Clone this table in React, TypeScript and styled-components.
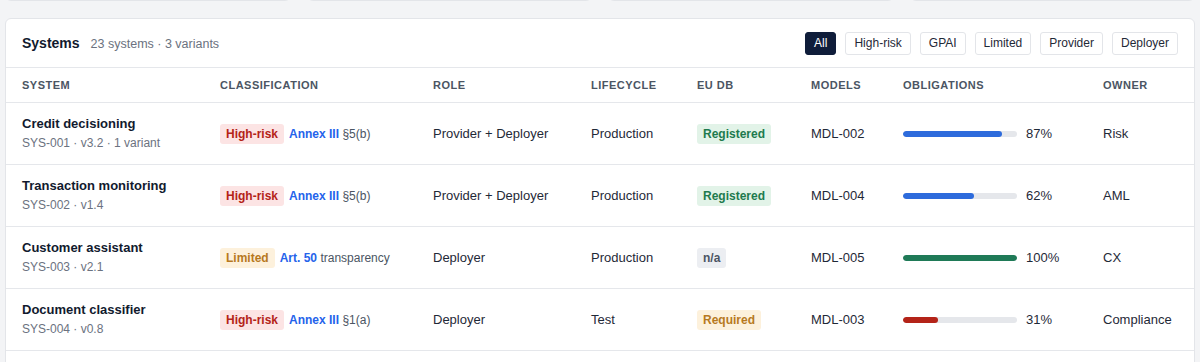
import React from 'react';
import styled, { createGlobalStyle } from 'styled-components';

const GlobalStyle = createGlobalStyle`
  html, body {
    margin: 0;
    padding: 0;
    background: #f3f4f6;
    font-family: 'Liberation Sans', Arial, Helvetica, sans-serif;
    color: #1f2937;
    overflow: hidden;
  }
`;

type Tone = 'red' | 'amber' | 'green' | 'gray';

const tones: Record<Tone, { bg: string; fg: string }> = {
  red: { bg: '#fce4e4', fg: '#b42318' },
  amber: { bg: '#fdf1dc', fg: '#b7791f' },
  green: { bg: '#e2f3e8', fg: '#1e7a4e' },
  gray: { bg: '#eceef2', fg: '#4b5563' },
};

const barColors: Record<string, string> = {
  blue: '#2d6bdc',
  green: '#1f7a57',
  red: '#b42318',
};

// page is scrolled a little: only the bottom edge of the stat cards shows
const Page = styled.div`
  display: flex;
  flex-direction: column;
  gap: 17px;
  margin-top: -89px;
  padding: 0 5px;
`;

const StatsRow = styled.div`
  display: grid;
  grid-template-columns: repeat(4, 1fr);
  gap: 16px;
`;

const StatCard = styled.div`
  height: 90px;
  box-sizing: border-box;
  background: #ffffff;
  border: 1px solid #e3e5e9;
  border-radius: 6px;
`;

const Card = styled.div`
  background: #ffffff;
  border: 1px solid #e3e5e9;
  border-radius: 6px;
  padding-bottom: 40px;
  overflow: hidden;
`;

const CardHeader = styled.div`
  display: flex;
  align-items: center;
  justify-content: space-between;
  height: 48px;
  padding: 0 16px;
  border-bottom: 1px solid #e5e7eb;
`;

const TitleGroup = styled.div`
  display: flex;
  align-items: baseline;
  gap: 11px;
`;

const Title = styled.h2`
  margin: 0;
  font-size: 14px;
  font-weight: 700;
  color: #111a2e;
`;

const Subtitle = styled.span`
  font-size: 12.5px;
  color: #6b7280;
`;

const Filters = styled.div`
  display: flex;
  gap: 9px;
`;

const FilterButton = styled.button<{ $active?: boolean }>`
  height: 23px;
  padding: 0 8px;
  border-radius: 3px;
  font-family: inherit;
  font-size: 12px;
  cursor: pointer;
  border: 1px solid ${(p) => (p.$active ? '#0f1d3a' : '#e3e5e9')};
  background: ${(p) => (p.$active ? '#0f1d3a' : '#ffffff')};
  color: ${(p) => (p.$active ? '#ffffff' : '#1f2937')};
`;

const Table = styled.table`
  width: 100%;
  border-collapse: collapse;
  table-layout: fixed;
`;

const HeadCell = styled.th`
  height: 34px;
  padding: 0 16px;
  text-align: left;
  font-size: 11px;
  font-weight: 700;
  letter-spacing: 0.5px;
  text-transform: uppercase;
  color: #4b5563;
  border-bottom: 1px solid #e5e7eb;
`;

const Row = styled.tr`
  border-bottom: 1px solid #e5e7eb;
`;

const Cell = styled.td`
  padding: 12px 16px;
  font-size: 13px;
  line-height: 18px;
  color: #1f2937;
  vertical-align: middle;
  white-space: nowrap;
`;

const Name = styled.div`
  font-weight: 700;
  color: #111a2e;
`;

const Meta = styled.div`
  margin-top: 1px;
  font-size: 12px;
  color: #6b7280;
`;

const Classification = styled.div`
  display: flex;
  align-items: center;
  gap: 5px;
  font-size: 12px;
`;

const Badge = styled.span<{ $tone: Tone }>`
  display: inline-block;
  height: 20px;
  line-height: 20px;
  padding: 0 6px;
  border-radius: 3px;
  font-size: 12px;
  font-weight: 700;
  background: ${(p) => tones[p.$tone].bg};
  color: ${(p) => tones[p.$tone].fg};
`;

const Ref = styled.span`
  color: #4b5563;
  b {
    color: #2563eb;
    font-weight: 700;
  }
`;

const Progress = styled.div`
  display: flex;
  align-items: center;
  gap: 9px;
`;

const Track = styled.div`
  width: 114px;
  height: 6px;
  border-radius: 3px;
  background: #e5e7eb;
  overflow: hidden;
`;

const Fill = styled.div<{ $color: string }>`
  height: 100%;
  border-radius: 3px;
  background: ${(p) => barColors[p.$color]};
`;

const columns = [
  { label: 'System', width: 198 },
  { label: 'Classification', width: 213 },
  { label: 'Role', width: 158 },
  { label: 'Lifecycle', width: 106 },
  { label: 'EU DB', width: 114 },
  { label: 'Models', width: 92 },
  { label: 'Obligations', width: 200 },
  { label: 'Owner', width: 107 },
];

const filters = ['All', 'High-risk', 'GPAI', 'Limited', 'Provider', 'Deployer'];

type System = {
  name: string;
  meta: string;
  risk: string;
  riskTone: Tone;
  ref: string;
  refRest: string;
  role: string;
  lifecycle: string;
  eudb: string;
  eudbTone: Tone;
  model: string;
  pct: number;
  bar: string;
  owner: string;
};

const systems: System[] = [
  {
    name: 'Credit decisioning',
    meta: 'SYS-001 · v3.2 · 1 variant',
    risk: 'High-risk',
    riskTone: 'red',
    ref: 'Annex III',
    refRest: '§5(b)',
    role: 'Provider + Deployer',
    lifecycle: 'Production',
    eudb: 'Registered',
    eudbTone: 'green',
    model: 'MDL-002',
    pct: 87,
    bar: 'blue',
    owner: 'Risk',
  },
  {
    name: 'Transaction monitoring',
    meta: 'SYS-002 · v1.4',
    risk: 'High-risk',
    riskTone: 'red',
    ref: 'Annex III',
    refRest: '§5(b)',
    role: 'Provider + Deployer',
    lifecycle: 'Production',
    eudb: 'Registered',
    eudbTone: 'green',
    model: 'MDL-004',
    pct: 62,
    bar: 'blue',
    owner: 'AML',
  },
  {
    name: 'Customer assistant',
    meta: 'SYS-003 · v2.1',
    risk: 'Limited',
    riskTone: 'amber',
    ref: 'Art. 50',
    refRest: 'transparency',
    role: 'Deployer',
    lifecycle: 'Production',
    eudb: 'n/a',
    eudbTone: 'gray',
    model: 'MDL-005',
    pct: 100,
    bar: 'green',
    owner: 'CX',
  },
  {
    name: 'Document classifier',
    meta: 'SYS-004 · v0.8',
    risk: 'High-risk',
    riskTone: 'red',
    ref: 'Annex III',
    refRest: '§1(a)',
    role: 'Deployer',
    lifecycle: 'Test',
    eudb: 'Required',
    eudbTone: 'amber',
    model: 'MDL-003',
    pct: 31,
    bar: 'red',
    owner: 'Compliance',
  },
];

export default function App() {
  return (
    <>
      <GlobalStyle />
      <Page>
        <StatsRow>
          <StatCard />
          <StatCard />
          <StatCard />
          <StatCard />
        </StatsRow>
        <Card>
          <CardHeader>
            <TitleGroup>
              <Title>Systems</Title>
              <Subtitle>23 systems · 3 variants</Subtitle>
            </TitleGroup>
            <Filters>
              {filters.map((f) => (
                <FilterButton key={f} $active={f === 'All'}>
                  {f}
                </FilterButton>
              ))}
            </Filters>
          </CardHeader>
          <Table>
            <colgroup>
              {columns.map((c) => (
                <col key={c.label} style={{ width: c.width }} />
              ))}
            </colgroup>
            <thead>
              <tr>
                {columns.map((c) => (
                  <HeadCell key={c.label}>{c.label}</HeadCell>
                ))}
              </tr>
            </thead>
            <tbody>
              {systems.map((s) => (
                <Row key={s.meta}>
                  <Cell>
                    <Name>{s.name}</Name>
                    <Meta>{s.meta}</Meta>
                  </Cell>
                  <Cell>
                    <Classification>
                      <Badge $tone={s.riskTone}>{s.risk}</Badge>
                      <Ref>
                        <b>{s.ref}</b> {s.refRest}
                      </Ref>
                    </Classification>
                  </Cell>
                  <Cell>{s.role}</Cell>
                  <Cell>{s.lifecycle}</Cell>
                  <Cell>
                    <Badge $tone={s.eudbTone}>{s.eudb}</Badge>
                  </Cell>
                  <Cell>{s.model}</Cell>
                  <Cell>
                    <Progress>
                      <Track>
                        <Fill $color={s.bar} style={{ width: `${s.pct}%` }} />
                      </Track>
                      <span>{s.pct}%</span>
                    </Progress>
                  </Cell>
                  <Cell>{s.owner}</Cell>
                </Row>
              ))}
            </tbody>
          </Table>
        </Card>
      </Page>
    </>
  );
}
